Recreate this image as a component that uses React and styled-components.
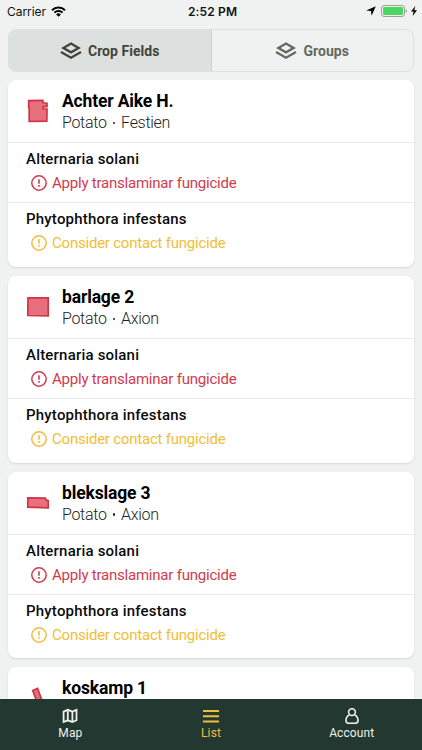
import React from "react"
import styled, { createGlobalStyle } from "styled-components"

const fields = [
  {
    name: "Achter Aike H.",
    crop: "Potato",
    variety: "Festien",
    shape: "3.7 2.6 17.8 2.4 18 4.8 22 5.2 22 8.6 18.2 8.6 18 10.8 22 11 21.8 23.2 4.2 23.4 4.2 10 3.7 9.6",
  },
  {
    name: "barlage 2",
    crop: "Potato",
    variety: "Axion",
    shape: "3 3.9 23.2 3.9 23.2 21.8 2.8 21.5",
  },
  {
    name: "blekslage 3",
    crop: "Potato",
    variety: "Axion",
    shape: "2.8 7.9 20.4 8.1 20.8 9.8 23.2 10.6 23.2 17.8 2.8 17.2",
  },
  {
    name: "koskamp 1",
    crop: "Potato",
    variety: "Axion",
    shape: "7.8 5.6 12.6 3.4 19.2 21.6 14.4 23.6",
  },
]

const advice = [
  { disease: "Alternaria solani", text: "Apply translaminar fungicide", color: "#d03b4e" },
  { disease: "Phytophthora infestans", text: "Consider contact fungicide", color: "#f2bd38" },
]

const LayersIcon = () => (
  <svg width="22" height="18" viewBox="0 0 22 18" fill="none" stroke="currentColor" strokeWidth="2.3">
    <path d="M11 1.5 L18.6 5.9 L11 10.3 L3.4 5.9 Z" />
    <path d="M1 10.1 L11 15.7 L21 10.1" />
  </svg>
)

const WarningIcon = () => (
  <svg width="16" height="16" viewBox="0 0 16 16" fill="none" stroke="currentColor">
    <circle cx="8" cy="8" r="7.2" strokeWidth="1.5" />
    <path d="M8 4.2 V8.8" strokeWidth="1.6" />
    <path d="M8 10.1 V11.8" strokeWidth="1.6" />
  </svg>
)

const FieldShape = ({ points }) => (
  <svg width="26" height="26" viewBox="0 0 26 26">
    <polygon points={points} fill="#e8707e" stroke="#cf3548" strokeWidth="1.7" />
  </svg>
)

const Field = ({ field }) => (
  <Card>
    <CardHeader>
      <FieldShape points={field.shape} />
      <CardTitle>
        <FieldName>{field.name}</FieldName>
        <Crop>
          {field.crop}
          <Dot />
          {field.variety}
        </Crop>
      </CardTitle>
    </CardHeader>
    {advice.map(item => (
      <Advice key={item.disease}>
        <Disease>{item.disease}</Disease>
        <Action $color={item.color}>
          <WarningIcon />
          <span>{item.text}</span>
        </Action>
      </Advice>
    ))}
  </Card>
)

const App = () => (
  <Screen>
    <GlobalStyle />
    <StatusBar>
      <StatusSide>
        <Carrier>Carrier</Carrier>
        <svg width="15" height="11" viewBox="0 0 15 11" fill="none" stroke="#000">
          <path d="M1 4.2 A9.2 9.2 0 0 1 14 4.2" strokeWidth="2" />
          <path d="M3.4 6.7 A5.8 5.8 0 0 1 11.6 6.7" strokeWidth="1.9" />
          <path d="M7.5 10.8 L5.1 8.4 A3.4 3.4 0 0 1 9.9 8.4 Z" fill="#000" stroke="none" />
        </svg>
      </StatusSide>
      <Time>2:52 PM</Time>
      <StatusSide $end>
        <svg width="10" height="10" viewBox="0 0 10 10">
          <path d="M9.8 0.2 L5.6 9.8 L5 5 L0.2 4.4 Z" />
        </svg>
        <Battery>
          <svg width="26" height="12" viewBox="0 0 26 12">
            <rect x="0.5" y="0.5" width="23" height="11" rx="2.6" fill="none" stroke="#9b9f9d" />
            <rect x="2" y="2" width="20" height="8" rx="1.3" fill="#4cd662" />
            <path d="M24.6 4 Q26 4.5 26 6 Q26 7.5 24.6 8 Z" fill="#9b9f9d" />
          </svg>
          <svg width="6" height="10" viewBox="0 0 6 10">
            <path d="M4.3 0 L0 5.6 H2.6 L1.6 10 L6 4.2 H3.3 Z" />
          </svg>
        </Battery>
      </StatusSide>
    </StatusBar>
    <Tabs>
      <Tab $active>
        <LayersIcon />
        Crop Fields
      </Tab>
      <Tab>
        <LayersIcon />
        Groups
      </Tab>
    </Tabs>
    <List>
      {fields.map(field => (
        <Field key={field.name} field={field} />
      ))}
    </List>
    <Nav>
      <NavItem>
        <svg width="16" height="16" viewBox="0 0 16 16" fill="none" stroke="currentColor" strokeWidth="1.8">
          <path d="M1.6 3.6 L5.8 1.8 L10.4 3.5 L14.5 1.8 V12.2 L10.4 14 L5.8 12.3 L1.6 14 Z" />
          <path d="M5.8 1.8 V12.3 M10.4 3.5 V14" />
        </svg>
        Map
      </NavItem>
      <NavItem $active>
        <svg width="16" height="16" viewBox="0 0 16 16" fill="none" stroke="currentColor" strokeWidth="2">
          <path d="M0 3 H16 M0 8.2 H16 M0 13.4 H16" />
        </svg>
        List
      </NavItem>
      <NavItem>
        <svg width="16" height="16" viewBox="0 0 16 16" fill="none" stroke="currentColor" strokeWidth="1.6">
          <circle cx="8" cy="4.1" r="3.4" />
          <path d="M5.3 7 C3 8 2 10 2 12.6 Q2 15.2 4.2 15.2 H11.8 Q14 15.2 14 12.6 C14 10 13 8 10.7 7" />
        </svg>
        Account
      </NavItem>
    </Nav>
  </Screen>
)

export default App

const GlobalStyle = createGlobalStyle`
  body {
    margin: 0;
    background: #eff2f1;
  }
  * {
    box-sizing: border-box;
  }
  svg {
    display: block;
    flex-shrink: 0;
  }
`

const Screen = styled.div`
  display: flex;
  flex-direction: column;
  height: 100vh;
  overflow: hidden;
  background: #eff2f1;
  color: #0b0c0c;
  font-family: Roboto, sans-serif;
`

const StatusBar = styled.div`
  display: flex;
  align-items: center;
  height: 22px;
  padding: 0 5px 0 7px;
  flex-shrink: 0;
  font-family: Inter, sans-serif;
  font-size: 12px;
  color: #111;
`

const StatusSide = styled.div`
  display: flex;
  flex: 1;
  align-items: center;
  gap: 5px;
  justify-content: ${props => (props.$end ? "flex-end" : "flex-start")};
`

const Carrier = styled.span`
  letter-spacing: -0.05px;
`

const Battery = styled.div`
  display: flex;
  align-items: center;
  gap: 4px;
`

const Time = styled.div`
  padding-left: 1px;
  font-weight: 600;
  letter-spacing: 0.15px;
`

const Tabs = styled.div`
  display: flex;
  flex-shrink: 0;
  height: 43px;
  margin: 7px 8px 8px;
  border: 1px solid #dde0df;
  border-radius: 8px;
  overflow: hidden;
`

const Tab = styled.div`
  display: flex;
  flex: 1;
  align-items: center;
  justify-content: center;
  gap: 6px;
  font-size: 14px;
  font-weight: 700;
  letter-spacing: 0.05px;
  color: ${props => (props.$active ? "#42443a" : "#66685f")};
  background: ${props => (props.$active ? "#dce0df" : "transparent")};
  border-right: ${props => (props.$active ? "1px solid #cdd1d0" : "none")};
`

const List = styled.div`
  flex: 1;
  min-height: 0;
  padding: 0 8px;
  overflow: hidden;
`

const Card = styled.div`
  height: 186.8px;
  margin-bottom: 9px;
  background: #fff;
  border-radius: 8px;
  box-shadow: 0 1px 2px rgba(40, 60, 55, 0.14);
`

const CardHeader = styled.div`
  display: flex;
  align-items: center;
  gap: 11px;
  height: 62px;
  padding-left: 17px;
`

const CardTitle = styled.div`
  padding-top: 2px;
`

const FieldName = styled.div`
  font-size: 17.5px;
  font-weight: 700;
  line-height: 22px;
  letter-spacing: -0.15px;
  color: #000;
`

const Crop = styled.div`
  display: flex;
  align-items: center;
  font-size: 16px;
  font-weight: 300;
  line-height: 22px;
  letter-spacing: -0.3px;
  color: #222;
`

const Dot = styled.span`
  width: 2.5px;
  height: 2.5px;
  margin: 0 6px;
  border-radius: 50%;
  background: #222;
`

const Advice = styled.div`
  height: 60px;
  padding: 5px 17px 0 18px;
  border-top: 1px solid #e8eaea;
`

const Disease = styled.div`
  font-size: 15px;
  font-weight: 500;
  line-height: 22px;
  letter-spacing: 0.2px;
  color: #0b0c0c;
`

const Action = styled.div`
  display: flex;
  align-items: center;
  gap: 5px;
  padding-left: 5px;
  font-size: 15px;
  line-height: 26px;
  letter-spacing: -0.22px;
  color: ${props => props.$color};
`

const Nav = styled.div`
  display: flex;
  flex-shrink: 0;
  height: 51px;
  background: #233831;
`

const NavItem = styled.div`
  display: flex;
  flex: 1;
  flex-direction: column;
  align-items: center;
  gap: 1px;
  padding-top: 9px;
  font-size: 12px;
  line-height: 16px;
  letter-spacing: 0.1px;
  color: ${props => (props.$active ? "#f0bd3f" : "#eef2ea")};
`
